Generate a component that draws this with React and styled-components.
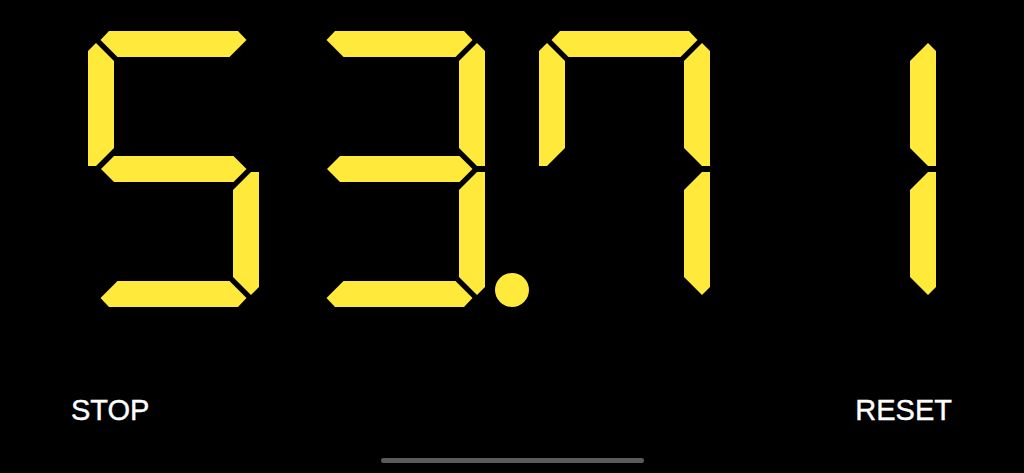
import React from "react";
import styled, { createGlobalStyle } from "styled-components";

const GlobalStyle = createGlobalStyle`
  html, body {
    margin: 0;
    padding: 0;
    background: #000;
  }
  #root {
    width: 1024px;
    height: 473px;
  }
`;

const SEGMENTS = {
  a: "21,0 150,0 158.5,9 141.5,26 29.5,26 12.5,9",
  b: "171,20 163,12 145,30 145,117 163,135 171,135",
  c: "171,256 163,264 145,246 145,159 163,141 171,141",
  d: "21,276 150,276 158.5,267 141.5,250 29.5,250 12.5,267",
  e: "0,256 8,264 26,246 26,159 8,141 0,141",
  f: "0,20 8,12 26,30 26,117 8,135 0,135",
  g: "13,138 26,125 145.5,125 158.5,138 145.5,151 26,151",
};

const DIGIT_MAP = {
  "0": "abcdef",
  "1": "bc",
  "2": "abdeg",
  "3": "abcdg",
  "4": "bcfg",
  "5": "acdfg",
  "6": "acdefg",
  "7": "abcf",
  "8": "abcdefg",
  "9": "abcdfg",
};

const Page = styled.div`
  width: 1024px;
  height: 473px;
  background: #000;
  display: flex;
  flex-direction: column;
  overflow: hidden;
`;

const Display = styled.div`
  display: flex;
  flex-direction: row;
  gap: 54.6px;
  padding: 31px 0 0 88px;
`;

const DigitSvg = styled.svg`
  width: 171px;
  height: 276px;
  overflow: visible;
  flex: none;
  display: block;
`;

const Segment = styled.polygon`
  fill: #ffea3c;
`;

const Controls = styled.div`
  display: flex;
  justify-content: space-between;
  padding: 89px 72px 0 71px;
`;

const ControlButton = styled.button`
  background: none;
  border: none;
  padding: 0;
  margin: 0;
  color: #fff;
  font-family: "Liberation Sans", Arial, sans-serif;
  font-size: 29px;
  line-height: 29px;
  -webkit-text-stroke: 0.4px #fff;
  cursor: pointer;
`;

const HomeIndicator = styled.div`
  margin: auto auto 10px;
  width: 263px;
  height: 5px;
  border-radius: 3px;
  background: #5b5b5b;
`;

function Digit({ value, dot }) {
  const on = DIGIT_MAP[value] || "";
  return (
    <DigitSvg viewBox="0 0 171 276">
      {on.split("").map((s) => (
        <Segment key={s} points={SEGMENTS[s]} />
      ))}
      {dot && <circle cx="198" cy="259" r="17" fill="#ffea3c" />}
    </DigitSvg>
  );
}

export default function App() {
  return (
    <>
      <GlobalStyle />
      <Page>
        <Display>
          <Digit value="5" />
          <Digit value="3" dot />
          <Digit value="7" />
          <Digit value="1" />
        </Display>
        <Controls>
          <ControlButton>STOP</ControlButton>
          <ControlButton>RESET</ControlButton>
        </Controls>
        <HomeIndicator />
      </Page>
    </>
  );
}
